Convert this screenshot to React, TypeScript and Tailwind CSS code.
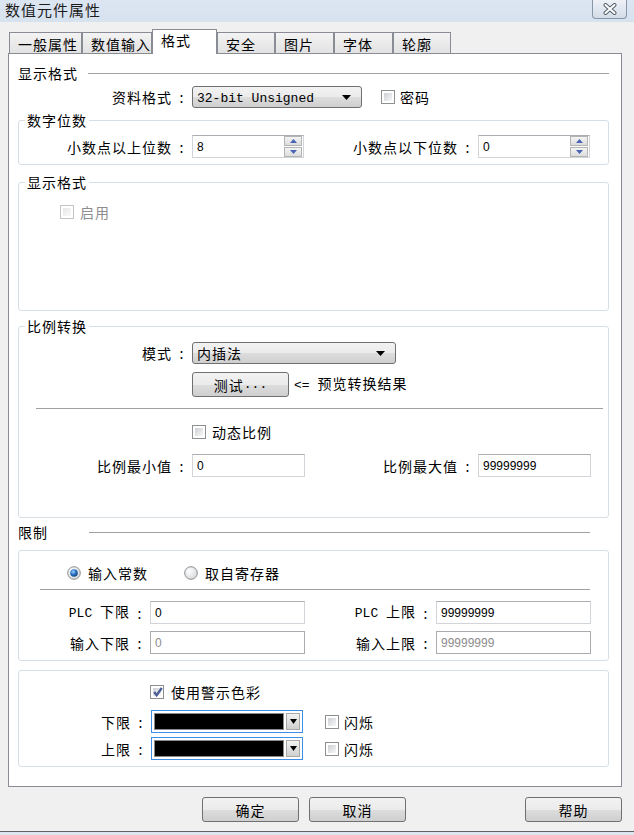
import React from "react";

const CJK = "font-['Noto_Sans_CJK_SC',sans-serif]";
const MONO = "font-['Liberation_Mono','Noto_Sans_CJK_SC',monospace] tracking-normal";
const BTN_BG =
  "bg-[linear-gradient(#f2f2f2_0%,#ebebeb_50%,#dddddd_51%,#cfcfcf_100%)]";

const Arrow = () => (
  <svg width="9" height="5" viewBox="0 0 9 5">
    <path d="M0 0H9L4.5 5Z" fill="#000" />
  </svg>
);

const Label = ({ children, w }: { children: React.ReactNode; w: string }) => (
  <div className={`${w} flex items-center justify-end shrink-0`}>
    <span>{children}</span>
    <span className="ml-[6px] mr-[6px] w-[8px] text-center">:</span>
  </div>
);

const CheckBox = ({
  checked = false,
  disabled = false,
}: {
  checked?: boolean;
  disabled?: boolean;
}) => (
  <span
    className={`relative w-[14px] h-[14px] shrink-0 border ${
      disabled ? "border-[#c4c4c4]" : "border-[#8e8f8f]"
    } bg-white p-[2px] flex`}
  >
    <span
      className={`flex-1 bg-linear-to-br ${
        disabled ? "from-[#e6e6e6] to-[#fafafa]" : "from-[#cdd0d4] to-[#f7f7f7]"
      }`}
    />
    {checked && (
      <svg
        className="absolute left-[1px] top-[0px]"
        width="12"
        height="12"
        viewBox="0 0 12 12"
      >
        <path
          d="M2.2 6L4.6 9.2L9.8 2"
          fill="none"
          stroke="#4a5d99"
          strokeWidth="2.3"
        />
      </svg>
    )}
  </span>
);

const Radio = ({ on = false }: { on?: boolean }) => (
  <svg width="14" height="14" viewBox="0 0 14 14" className="shrink-0">
    <defs>
      <radialGradient id="rbg" cx="0.35" cy="0.35" r="0.8">
        <stop offset="0" stopColor="#ffffff" />
        <stop offset="1" stopColor="#d2d4d6" />
      </radialGradient>
      <radialGradient id="rdot" cx="0.4" cy="0.35" r="0.7">
        <stop offset="0" stopColor="#9fd3ff" />
        <stop offset="0.5" stopColor="#2a76c4" />
        <stop offset="1" stopColor="#0f3e78" />
      </radialGradient>
    </defs>
    <circle cx="7" cy="7" r="6.3" fill="url(#rbg)" stroke="#8b8d90" strokeWidth="1" />
    {on && <circle cx="7" cy="7" r="3.8" fill="url(#rdot)" />}
  </svg>
);

const Field = ({
  value,
  w,
  disabled = false,
  spin = false,
}: {
  value: string;
  w: string;
  disabled?: boolean;
  spin?: boolean;
}) => (
  <div
    className={`${w} h-[23px] shrink-0 border bg-white flex items-center pl-[4px] font-['Liberation_Sans',sans-serif] text-[12px] tracking-normal ${
      disabled
        ? "border-[#a8abaf] text-[#8c8c8c]"
        : "border-[#d1d4d8] border-t-[#abadb3] text-black"
    }`}
  >
    <span className="flex-1">{value}</span>
    {spin && (
      <div className="flex flex-col gap-[1px] mr-[1px] h-[21px]">
        {[0, 1].map((i) => (
          <div
            key={i}
            className="w-[18px] h-[10px] border border-[#b4b4b4] bg-linear-to-b from-[#f4f4f4] to-[#dcdcdc] flex items-center justify-center"
          >
            <svg width="7" height="4" viewBox="0 0 7 4">
              <path d={i === 0 ? "M0 4H7L3.5 0Z" : "M0 0H7L3.5 4Z"} fill="#4a64b4" />
            </svg>
          </div>
        ))}
      </div>
    )}
  </div>
);

const Select = ({ children, w }: { children: React.ReactNode; w: string }) => (
  <div
    className={`${w} h-[22px] shrink-0 border border-[#707070] rounded-[3px] ${BTN_BG} flex items-center pl-[4px] pr-[10px]`}
  >
    <span className="flex-1">{children}</span>
    <Arrow />
  </div>
);

const ColorSelect = () => (
  <div className="w-[152px] h-[23px] shrink-0 border border-[#3d8ee6] bg-white flex p-[2px] gap-[2px]">
    <div className="flex-1 bg-black border border-[#8a8a8a]" />
    <div className="w-[14px] border border-[#a8a8a8] bg-linear-to-b from-[#f3f3f3] to-[#cfcfcf] flex items-center justify-center">
      <svg width="7" height="5" viewBox="0 0 7 5">
        <path d="M0 0H7L3.5 5Z" fill="#000" />
      </svg>
    </div>
  </div>
);

const Group = ({
  label,
  className,
  children,
}: {
  label?: string;
  className: string;
  children?: React.ReactNode;
}) => (
  <div className={`relative border border-[#d5dfe5] rounded-[3px] ${className}`}>
    {label && (
      <span className="absolute -top-[9px] left-[6px] bg-white px-[2px] leading-[16px]">
        {label}
      </span>
    )}
    {children}
  </div>
);

const Button = ({ children, className }: { children: React.ReactNode; className?: string }) => (
  <div
    className={`w-[97px] h-[25px] border border-[#707070] rounded-[3px] ${BTN_BG} flex items-center justify-center ${className ?? ""}`}
  >
    {children}
  </div>
);

const tabs = [
  { t: "一般属性", w: "w-[73px]" },
  { t: "数值输入", w: "w-[70px]" },
  { t: "格式", w: "w-[65px]", on: true },
  { t: "安全", w: "w-[58px]" },
  { t: "图片", w: "w-[59px]" },
  { t: "字体", w: "w-[59px]" },
  { t: "轮廓", w: "w-[58px]" },
];

export default function App() {
  return (
    <div
      className={`w-[634px] h-[835px] overflow-hidden bg-[#f0f0f0] text-black text-[14px] leading-[16px] tracking-[1px] ${CJK}`}
    >
      {/* title bar */}
      <div className="h-[22px] bg-linear-to-b from-[#dce6f2] to-[#d7e2ef] flex items-start">
        <span className="ml-[5px] h-[20px] leading-[20px] text-[15px] text-[#1c1c1c]">数值元件属性</span>
        <div className="ml-auto mr-[7px] w-[35px] h-[19px] border border-t-0 border-[#8796a8] rounded-b-[4px] bg-linear-to-b from-[#eef2f7] to-[#d3dce7] flex items-center justify-center">
          <svg width="14" height="12" viewBox="0 0 14 12">
            <path d="M2.5 2L11.5 10M11.5 2L2.5 10" stroke="#56606c" strokeWidth="4" strokeLinecap="round" />
            <path d="M2.5 2L11.5 10M11.5 2L2.5 10" stroke="#fff" strokeWidth="2" strokeLinecap="round" />
          </svg>
        </div>
      </div>

      {/* tabs */}
      <div className="mt-[7px] h-[24px] pl-[9px] flex items-end">
        {tabs.map((tab) =>
          tab.on ? (
            <div
              key={tab.t}
              className={`${tab.w} relative z-10 -mb-[1px] h-[25px] border border-b-0 border-[#898c95] bg-white pl-[8px] pt-[2px]`}
            >
              {tab.t}
            </div>
          ) : (
            <div
              key={tab.t}
              className={`${tab.w} h-[21px] border border-b-0 border-[#898c95] bg-linear-to-b from-[#f3f3f3] to-[#e2e2e2] pl-[8px] pt-[3px]`}
            >
              {tab.t}
            </div>
          )
        )}
      </div>

      {/* panel */}
      <div className="ml-[8px] w-[614px] h-[734px] border border-[#898c95] bg-white pl-[9px] pr-[12px] flex flex-col">
        <div className="mt-[11px] h-[16px] flex items-center">
          <span>显示格式</span>
          <div className="flex-1 h-px bg-[#a0a0a0] ml-[10px]" />
        </div>

        <div className="mt-[5px] h-[22px] flex items-center">
          <Label w="w-[174px]">资料格式</Label>
          <Select w="w-[170px]">
            <span className={`${MONO} text-[13px]`}>32-bit Unsigned</span>
          </Select>
          <span className="ml-[19px]">
            <CheckBox />
          </span>
          <span className="ml-[5px]">密码</span>
        </div>

        <Group label="数字位数" className="mt-[12px] h-[45px] pt-[14px]">
          <div className="h-[23px] flex items-center">
            <Label w="w-[173px]">小数点以上位数</Label>
            <Field value="8" w="w-[112px]" spin />
            <Label w="w-[174px]">小数点以下位数</Label>
            <Field value="0" w="w-[112px]" spin />
          </div>
        </Group>

        <Group label="显示格式" className="mt-[17px] h-[129px] pt-[21px] pl-[41px]">
          <div className="flex items-center h-[15px]">
            <CheckBox disabled />
            <span className="ml-[6px] text-[#8d8d8d]">启用</span>
          </div>
        </Group>

        <Group label="比例转换" className="mt-[15px] h-[192px] pt-[15px]">
          <div className="h-[22px] flex items-center">
            <Label w="w-[173px]">模式</Label>
            <Select w="w-[204px]">内插法</Select>
          </div>
          <div className="mt-[8px] pl-[173px] flex items-center">
            <Button className="h-[23px]">
              测试<span className={`${MONO} text-[13px] tracking-[2px]`}>...</span>
            </Button>
            <span className="ml-[5px]">
              <span className={`${MONO} text-[13px]`}>&lt;= </span>预览转换结果
            </span>
          </div>
          <div className="mt-[11px] ml-[17px] mr-[5px] h-px bg-[#a0a0a0]" />
          <div className="mt-[15px] h-[15px] pl-[173px] flex items-center">
            <CheckBox />
            <span className="ml-[6px]">动态比例</span>
          </div>
          <div className="mt-[15px] h-[23px] flex items-center">
            <Label w="w-[173px]">比例最小值</Label>
            <Field value="0" w="w-[113px]" />
            <Label w="w-[173px]">比例最大值</Label>
            <Field value="99999999" w="w-[113px]" />
          </div>
        </Group>

        <div className="mt-[6px] h-[16px] flex items-center">
          <span>限制</span>
          <div className="flex-1 h-px bg-[#a0a0a0] ml-[41px] mr-[19px]" />
        </div>

        <Group className="mt-[10px] h-[111px] pt-[14px]">
          <div className="h-[15px] pl-[48px] flex items-center">
            <Radio on />
            <span className="ml-[7px]">输入常数</span>
            <span className="ml-[36px]">
              <Radio />
            </span>
            <span className="ml-[7px]">取自寄存器</span>
          </div>
          <div className="mt-[9px] ml-[21px] mr-[18px] h-px bg-[#a0a0a0]" />
          <div className="mt-[11px] h-[23px] flex items-center">
            <Label w="w-[131px]">
              <span className={`${MONO} text-[13px]`}>PLC </span>下限
            </Label>
            <Field value="0" w="w-[155px]" />
            <Label w="w-[131px]">
              <span className={`${MONO} text-[13px]`}>PLC </span>上限
            </Label>
            <Field value="99999999" w="w-[155px]" />
          </div>
          <div className="mt-[7px] h-[23px] flex items-center">
            <Label w="w-[131px]">输入下限</Label>
            <Field value="0" w="w-[155px]" disabled />
            <Label w="w-[131px]">输入上限</Label>
            <Field value="99999999" w="w-[155px]" disabled />
          </div>
        </Group>

        <Group className="mt-[9px] h-[97px] pt-[13px]">
          <div className="h-[15px] pl-[131px] flex items-center">
            <CheckBox checked />
            <span className="ml-[7px]">使用警示色彩</span>
          </div>
          {["下限", "上限"].map((t, i) => (
            <div key={t} className={`${i === 0 ? "mt-[11px]" : "mt-[4px]"} h-[23px] flex items-center`}>
              <Label w="w-[132px]">{t}</Label>
              <ColorSelect />
              <span className="ml-[22px]">
                <CheckBox />
              </span>
              <span className="ml-[5px]">闪烁</span>
            </div>
          ))}
        </Group>
      </div>

      {/* footer buttons */}
      <div className="mt-[10px] h-[25px] flex">
        <Button className="ml-[202px]">确定</Button>
        <Button className="ml-[10px]">取消</Button>
        <Button className="ml-[119px]">帮助</Button>
      </div>
      <div className="mt-[9px] h-px bg-[#5f6368]" />
      <div className="h-[3px] bg-[#dce6f0]" />
    </div>
  );
}
